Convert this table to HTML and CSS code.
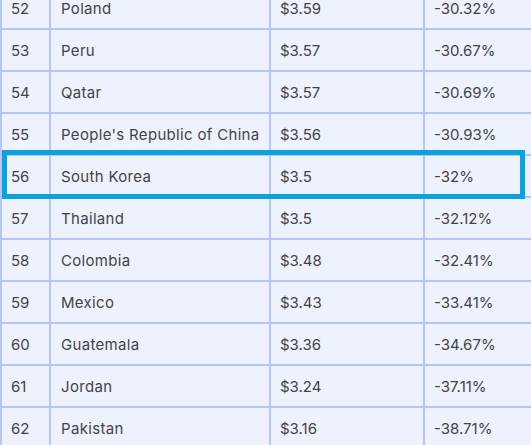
FILE: index.html
```html
<!DOCTYPE html>
<html>
<head>
<meta charset="utf-8">
<link rel="stylesheet" href="styles.css">
</head>
<body>
<div class="wrap">
  <div class="grid">
    <div class="cell">52</div><div class="cell name">Poland</div><div class="cell">$3.59</div><div class="cell">-30.32%</div>
    <div class="cell">53</div><div class="cell name">Peru</div><div class="cell">$3.57</div><div class="cell">-30.67%</div>
    <div class="cell">54</div><div class="cell name">Qatar</div><div class="cell">$3.57</div><div class="cell">-30.69%</div>
    <div class="cell">55</div><div class="cell name">People's Republic of China</div><div class="cell">$3.56</div><div class="cell">-30.93%</div>
    <div class="cell">56</div><div class="cell name">South Korea</div><div class="cell">$3.5</div><div class="cell">-32%</div>
    <div class="cell">57</div><div class="cell name">Thailand</div><div class="cell">$3.5</div><div class="cell">-32.12%</div>
    <div class="cell">58</div><div class="cell name">Colombia</div><div class="cell">$3.48</div><div class="cell">-32.41%</div>
    <div class="cell">59</div><div class="cell name">Mexico</div><div class="cell">$3.43</div><div class="cell">-33.41%</div>
    <div class="cell">60</div><div class="cell name">Guatemala</div><div class="cell">$3.36</div><div class="cell">-34.67%</div>
    <div class="cell">61</div><div class="cell name">Jordan</div><div class="cell">$3.24</div><div class="cell">-37.11%</div>
    <div class="cell">62</div><div class="cell name">Pakistan</div><div class="cell">$3.16</div><div class="cell">-38.71%</div>
  </div>
  <div class="highlight"></div>
</div>
</body>
</html>
```

FILE: styles.css
```css
html, body {
  margin: 0;
  padding: 0;
  overflow: hidden;
  background: #eef2ff;
}
.wrap {
  position: relative;
  width: 531px;
  height: 445px;
  overflow: hidden;
}
.grid {
  display: grid;
  grid-template-columns: 47px 218px 152px 140px;
  grid-auto-rows: 40px;
  gap: 2px;
  padding-left: 2px;
  margin-top: -12px;
  width: 570px;
  background: #b4c6f6;
}
.cell {
  background: #eef2ff;
  display: flex;
  align-items: center;
  padding-left: 9px;
  font-family: Inter, "Noto Sans", sans-serif;
  font-size: 15px;
  color: #444444;
  white-space: nowrap;
}
.name {
  padding-left: 10px;
  letter-spacing: 0.32px;
}
.highlight {
  position: absolute;
  left: 2px;
  top: 150px;
  width: 513px;
  height: 39px;
  border: 5px solid #0aa3e0;
}
```
